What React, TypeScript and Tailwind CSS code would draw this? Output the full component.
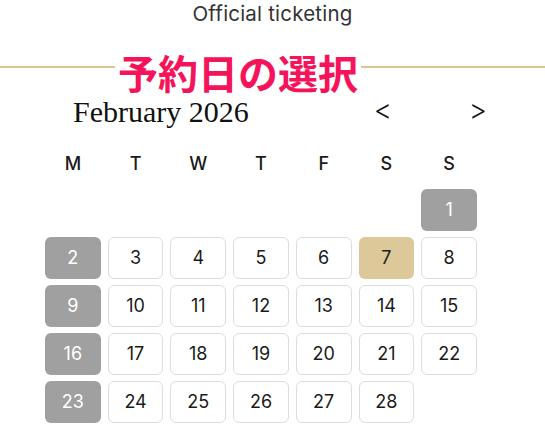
import React from "react";

type Day = { n: number; kind: "closed" | "open" | "selected" };

const weekdays = ["M", "T", "W", "T", "F", "S", "S"];

// Feb 2026 starts on a Sunday; Mondays are closed
const offset = 6;
const days: Day[] = Array.from({ length: 28 }, (_, i) => {
  const n = i + 1;
  const col = (offset + i) % 7;
  if (n === 7) return { n, kind: "selected" };
  if (n === 1 || col === 0) return { n, kind: "closed" };
  return { n, kind: "open" };
});

function DayCell({ day }: { day: Day }) {
  const base = "h-[41px] rounded-[6px] flex items-center justify-center text-[18px]";
  if (day.kind === "closed")
    return <div className={`${base} bg-[#a0a0a0] text-white`}>{day.n}</div>;
  if (day.kind === "selected")
    return <div className={`${base} bg-[#dcc898] text-[#1f1f1f]`}>{day.n}</div>;
  return (
    <div className={`${base} bg-white border-[1.5px] border-[#dcdcdc] text-[#1a1a1a]`}>
      {day.n}
    </div>
  );
}

export default function App() {
  const cells: (Day | null)[] = [...Array(offset).fill(null), ...days];

  return (
    <div className="w-[545px] h-[432px] overflow-hidden bg-white font-['Inter',sans-serif]">
      <div className="pt-[2px] text-center text-[20.5px] leading-[24px] text-[#333] tracking-[0.2px]">
        Official ticketing
      </div>

      <div className="mt-[26px] flex items-center h-[40px]">
        <div className="w-[115px] h-[2px] bg-[#d9c690] mb-[10px]" />
        <h1 className="px-[3px] text-[40px] leading-[40px] font-bold text-[#f5135a] font-['Noto_Sans_CJK_JP',sans-serif]">
          予約日の選択
        </h1>
        <div className="flex-1 h-[2px] bg-[#d9c690] mb-[10px]" />
      </div>

      <div className="mt-[2px] ml-[45px] w-[448px] h-[36px] flex items-center">
        <span className="pl-[28px] text-[30px] leading-[34px] text-[#111] font-['Liberation_Serif',serif]">
          February 2026
        </span>
        <div className="flex-1" />
        <button className="w-[30px] text-center text-[28px] leading-[34px] font-light text-[#111] -translate-y-[2px]">&lt;</button>
        <button className="ml-[65px] w-[30px] text-center text-[28px] leading-[34px] font-light text-[#111] -translate-y-[2px]">&gt;</button>
      </div>

      <div className="ml-[45px] w-[432px]">
        <div className="mt-[18px] grid grid-cols-7 gap-x-[7px] h-[30px] items-center">
          {weekdays.map((w, i) => (
            <div key={i} className="text-center text-[18px] font-medium text-[#1a1a1a]">
              {w}
            </div>
          ))}
        </div>
        <div className="mt-[11px] grid grid-cols-7 gap-x-[7px] gap-y-[6.5px] [&>div]:h-[41.5px]">
          {cells.map((c, i) => (c ? <DayCell key={i} day={c} /> : <div key={i} />))}
        </div>
      </div>
    </div>
  );
}
